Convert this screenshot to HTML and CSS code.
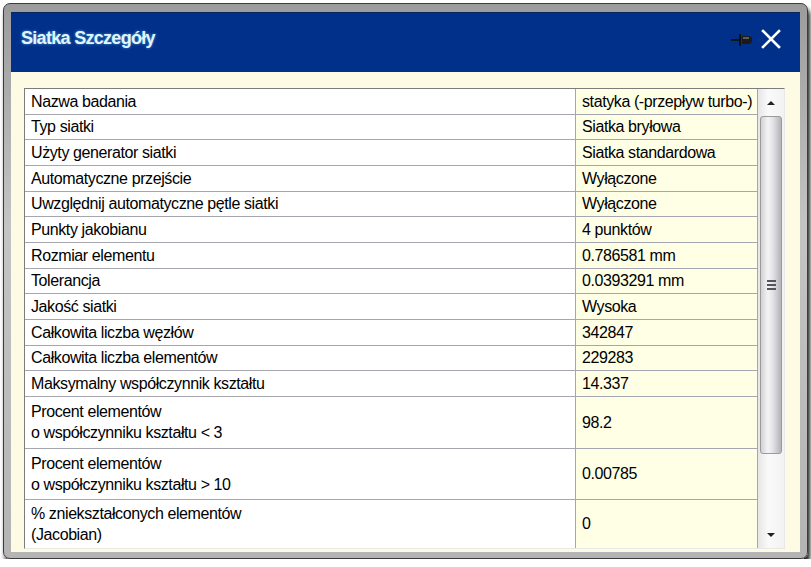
FILE: index.html
```html
<!DOCTYPE html>
<html lang="pl">

<head>
    <meta charset="UTF-8">
    <title>Siatka Szczegóły</title>
    <link rel="stylesheet" href="styles.css">
</head>

<body>
    <div class="window">
        <div class="titlebar">
            <span class="title">Siatka Szczegóły</span>
            <div class="tools">
                <svg class="pin" width="22" height="16" viewBox="0 0 22 16">
                    <path d="M0 8 H10" stroke="#111" stroke-width="2" />
                    <path d="M9 2 V14" stroke="#111" stroke-width="2" />
                    <path d="M11 4 H19 L21 6 V10 L19 12 H11 Z" fill="#1a1a1a" />
                    <path d="M12 6 H18" stroke="#8a8a8a" stroke-width="1.2" />
                </svg>
                <svg class="close" width="20" height="20" viewBox="0 0 20 20">
                    <path d="M2 2 L18 18 M18 2 L2 18" stroke="#fff" stroke-width="2.6" stroke-linecap="square" />
                </svg>
            </div>
        </div>

        <div class="content">
            <div class="grid-box">
                <div class="props">
                    <div class="label">Nazwa badania</div>
                    <div class="value">statyka (-przepływ turbo-)</div>
                    <div class="label">Typ siatki</div>
                    <div class="value">Siatka bryłowa</div>
                    <div class="label">Użyty generator siatki</div>
                    <div class="value">Siatka standardowa</div>
                    <div class="label">Automatyczne przejście</div>
                    <div class="value">Wyłączone</div>
                    <div class="label">Uwzględnij automatyczne pętle siatki</div>
                    <div class="value">Wyłączone</div>
                    <div class="label">Punkty jakobianu</div>
                    <div class="value">4 punktów</div>
                    <div class="label">Rozmiar elementu</div>
                    <div class="value">0.786581 mm</div>
                    <div class="label">Tolerancja</div>
                    <div class="value">0.0393291 mm</div>
                    <div class="label">Jakość siatki</div>
                    <div class="value">Wysoka</div>
                    <div class="label">Całkowita liczba węzłów</div>
                    <div class="value">342847</div>
                    <div class="label">Całkowita liczba elementów</div>
                    <div class="value">229283</div>
                    <div class="label">Maksymalny współczynnik kształtu</div>
                    <div class="value">14.337</div>
                    <div class="label">Procent elementów<br>o współczynniku kształtu &lt; 3</div>
                    <div class="value">98.2</div>
                    <div class="label">Procent elementów<br>o współczynniku kształtu &gt; 10</div>
                    <div class="value">0.00785</div>
                    <div class="label last">% zniekształconych elementów<br>(Jacobian)</div>
                    <div class="value last">0</div>
                </div>

                <div class="scrollbar">
                    <div class="arrow up"></div>
                    <div class="thumb">
                        <div class="grip"></div>
                    </div>
                    <div class="track"></div>
                    <div class="arrow down"></div>
                </div>
            </div>
        </div>
    </div>
</body>

</html>
```

FILE: styles.css
```css
body {
    margin: 0;
    background-color: #fff;
    font-family: "Liberation Sans", Arial, sans-serif;
    color: #000;
}

.window {
    margin: 3px 0 0 3px;
    width: 805px;
    height: 556px;
    box-sizing: border-box;
    border: 1px solid #3c3c3c;
    border-radius: 7px;
    padding: 8px 7px 6px 7px;
    background: linear-gradient(#9c9c9c, #c4c4c4 40%, #b4b4b4);
    box-shadow: 2px 5px 4px #1e1e1e;
    display: flex;
    flex-direction: column;
}

.titlebar {
    height: 60px;
    flex: none;
    background-color: #00308a;
    border-top: 1px solid #0a2460;
    box-sizing: border-box;
    display: flex;
    align-items: center;
    justify-content: space-between;
    padding: 0 19px 8px 10px;
}

.title {
    font-size: 18px;
    font-weight: bold;
    letter-spacing: -0.7px;
    color: #dff6ff;
    text-shadow: 0 0 3px rgba(140, 220, 255, 0.6);
}

.tools {
    display: flex;
    align-items: center;
    gap: 8px;
}

.pin {
    margin-top: 2px;
}

.content {
    flex: 1;
    background-color: #fdfbe4;
    padding: 16px 15px 3px 13px;
    display: flex;
}

.grid-box {
    flex: 1;
    display: flex;
    border: 1px solid #7c7c7c;
    border-right-color: #e8e8e8;
    border-bottom-color: #e8e8e8;
    box-shadow: inset 1px 1px 0 #c0c0c0;
    background-color: #fff;
}

.props {
    display: grid;
    grid-template-columns: 551px 182px;
    grid-template-rows: repeat(12, 25.67px) 52px 51px 1fr;
    font-size: 16px;
    letter-spacing: -0.4px;
}

.label,
.value {
    display: flex;
    align-items: center;
    box-sizing: border-box;
    border-bottom: 1px solid #a6a6b0;
    border-right: 1px solid #a6a6b0;
    padding-left: 6px;
    line-height: 21px;
}

.label {
    background-color: #fff;
}

.value {
    background-color: #ffffe6;
}

.last {
    border-bottom: none;
}

.scrollbar {
    flex: 1;
    display: flex;
    flex-direction: column;
    background: linear-gradient(90deg, #e6e6e6, #fafafa 40%, #f2f2f2);
    padding: 0 2px;
}

.arrow {
    height: 27px;
    flex: none;
    position: relative;
}

.arrow::after {
    content: '';
    position: absolute;
    left: 50%;
    top: 50%;
    margin-left: -4px;
    border-left: 4px solid transparent;
    border-right: 4px solid transparent;
}

.arrow.up::after {
    margin-top: -2px;
    border-bottom: 4px solid #222;
}

.arrow.down::after {
    margin-top: -2px;
    border-top: 4px solid #222;
}

.thumb {
    height: 338px;
    flex: none;
    border: 1px solid #9a9a9a;
    border-radius: 3px;
    box-sizing: border-box;
    background: linear-gradient(90deg, #d2d2d2, #f4f4f6 35%, #e2e2e6 60%, #b4b4b8);
    display: flex;
    align-items: center;
    justify-content: center;
}

.grip {
    width: 9px;
    height: 10px;
    background: repeating-linear-gradient(#555 0 2px, transparent 2px 4px);
}

.track {
    flex: 1;
}
```
